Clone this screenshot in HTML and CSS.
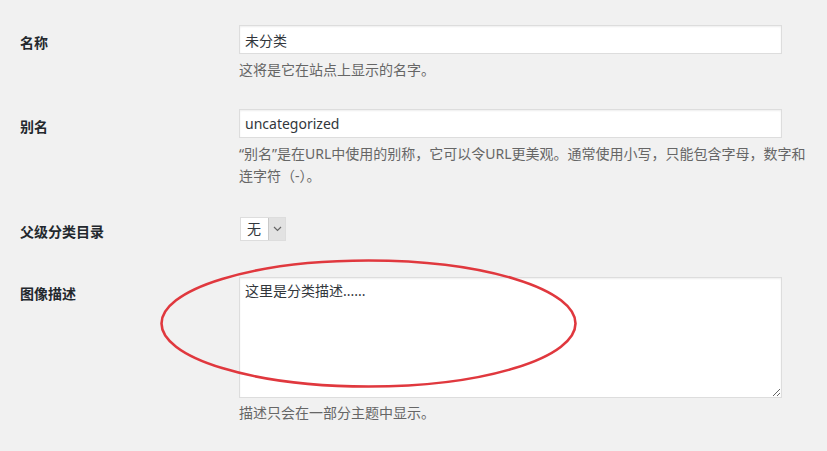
FILE: index.html
```html
<!DOCTYPE html>
<html lang="zh-CN">
<head>
<meta charset="utf-8">
<title>编辑分类</title>
<link rel="stylesheet" href="styles.css">
</head>
<body>
<div class="page">
  <div class="form">
    <div class="row row-name">
      <div class="label">名称</div>
      <div class="field">
        <input class="text-input" type="text" value="未分类">
        <p class="desc">这将是它在站点上显示的名字。</p>
      </div>
    </div>
    <div class="row row-slug">
      <div class="label">别名</div>
      <div class="field">
        <input class="text-input" type="text" value="uncategorized">
        <p class="desc">“别名”是在URL中使用的别称，它可以令URL更美观。通常使用小写，只能包含字母，数字和<br>连字符（-）。</p>
      </div>
    </div>
    <div class="row row-parent">
      <div class="label label-parent">父级分类目录</div>
      <div class="field">
        <div class="select">
          <span class="select-value">无</span>
          <span class="select-arrow">
            <svg width="9" height="6" viewBox="0 0 9 6"><path d="M1 1 L4.5 4.5 L8 1" fill="none" stroke="#666" stroke-width="1.2"/></svg>
          </span>
        </div>
      </div>
    </div>
    <div class="row row-desc">
      <div class="label label-desc">图像描述</div>
      <div class="field">
        <textarea class="textarea">这里是分类描述......</textarea>
        <p class="desc desc-last">描述只会在一部分主题中显示。</p>
      </div>
    </div>
  </div>
  <svg class="annotation" width="423" height="135" viewBox="0 0 423 135">
    <ellipse cx="211.5" cy="67.5" rx="207" ry="63" fill="none" stroke="#e0383e" stroke-width="2.6"/>
  </svg>
</div>
</body>
</html>
```
FILE: styles.css
```css
* { box-sizing: border-box; }
html, body {
  margin: 0;
  padding: 0;
  background: #f1f1f1;
}
body {
  font-family: "Noto Sans", "Noto Sans CJK SC", sans-serif;
  font-size: 14px;
  color: #444;
}
.page {
  position: relative;
  width: 827px;
  height: 451px;
  overflow: hidden;
}
.form {
  display: flex;
  flex-direction: column;
  padding-top: 25px;
}
.row {
  display: grid;
  grid-template-columns: 239px 588px;
  align-items: start;
}
.row-slug { margin-top: 28px; }
.row-parent { margin-top: 30px; }
.row-desc { margin-top: 36px; }
.label {
  padding-left: 20px;
  margin-top: 7px;
  font-weight: 700;
  line-height: 20px;
  color: #23282d;
  font-family: "Noto Sans CJK SC", sans-serif;
}
.label-parent { margin-top: 4px; }
.label-desc { margin-top: 6px; }
.field {
  display: flex;
  flex-direction: column;
  align-items: flex-start;
}
.text-input {
  width: 543px;
  height: 29px;
  margin: 0;
  padding: 0 5px;
  border: 1px solid #ddd;
  background: #fff;
  box-shadow: inset 0 1px 2px rgba(0,0,0,.07);
  font-family: "Noto Sans", "Noto Sans CJK SC", sans-serif;
  font-size: 14px;
  color: #32373c;
  outline: none;
}
.desc {
  margin: 5px 0 0;
  line-height: 22px;
  color: #666;
  font-size: 14px;
}
.select {
  display: flex;
  align-items: stretch;
  height: 24px;
  margin-left: 1px;
  border: 1px solid #ddd;
  background: #fff;
}
.select-value {
  padding: 0 7px 0 6px;
  line-height: 22px;
  color: #32373c;
}
.select-arrow {
  width: 17px;
  display: flex;
  align-items: center;
  justify-content: center;
  background: #e2e2e2;
  border-left: 1px solid #c9c9c9;
}
.textarea {
  display: block;
  width: 543px;
  height: 121px;
  margin: 0;
  padding: 3px 5px;
  border: 1px solid #ddd;
  background: #fff;
  box-shadow: inset 0 1px 2px rgba(0,0,0,.07);
  font-family: "Noto Sans", "Noto Sans CJK SC", sans-serif;
  font-size: 14px;
  line-height: 20px;
  color: #32373c;
  resize: vertical;
  outline: none;
}
.desc-last { margin-top: 4px; }
.annotation {
  position: absolute;
  left: 157px;
  top: 256px;
}
```
